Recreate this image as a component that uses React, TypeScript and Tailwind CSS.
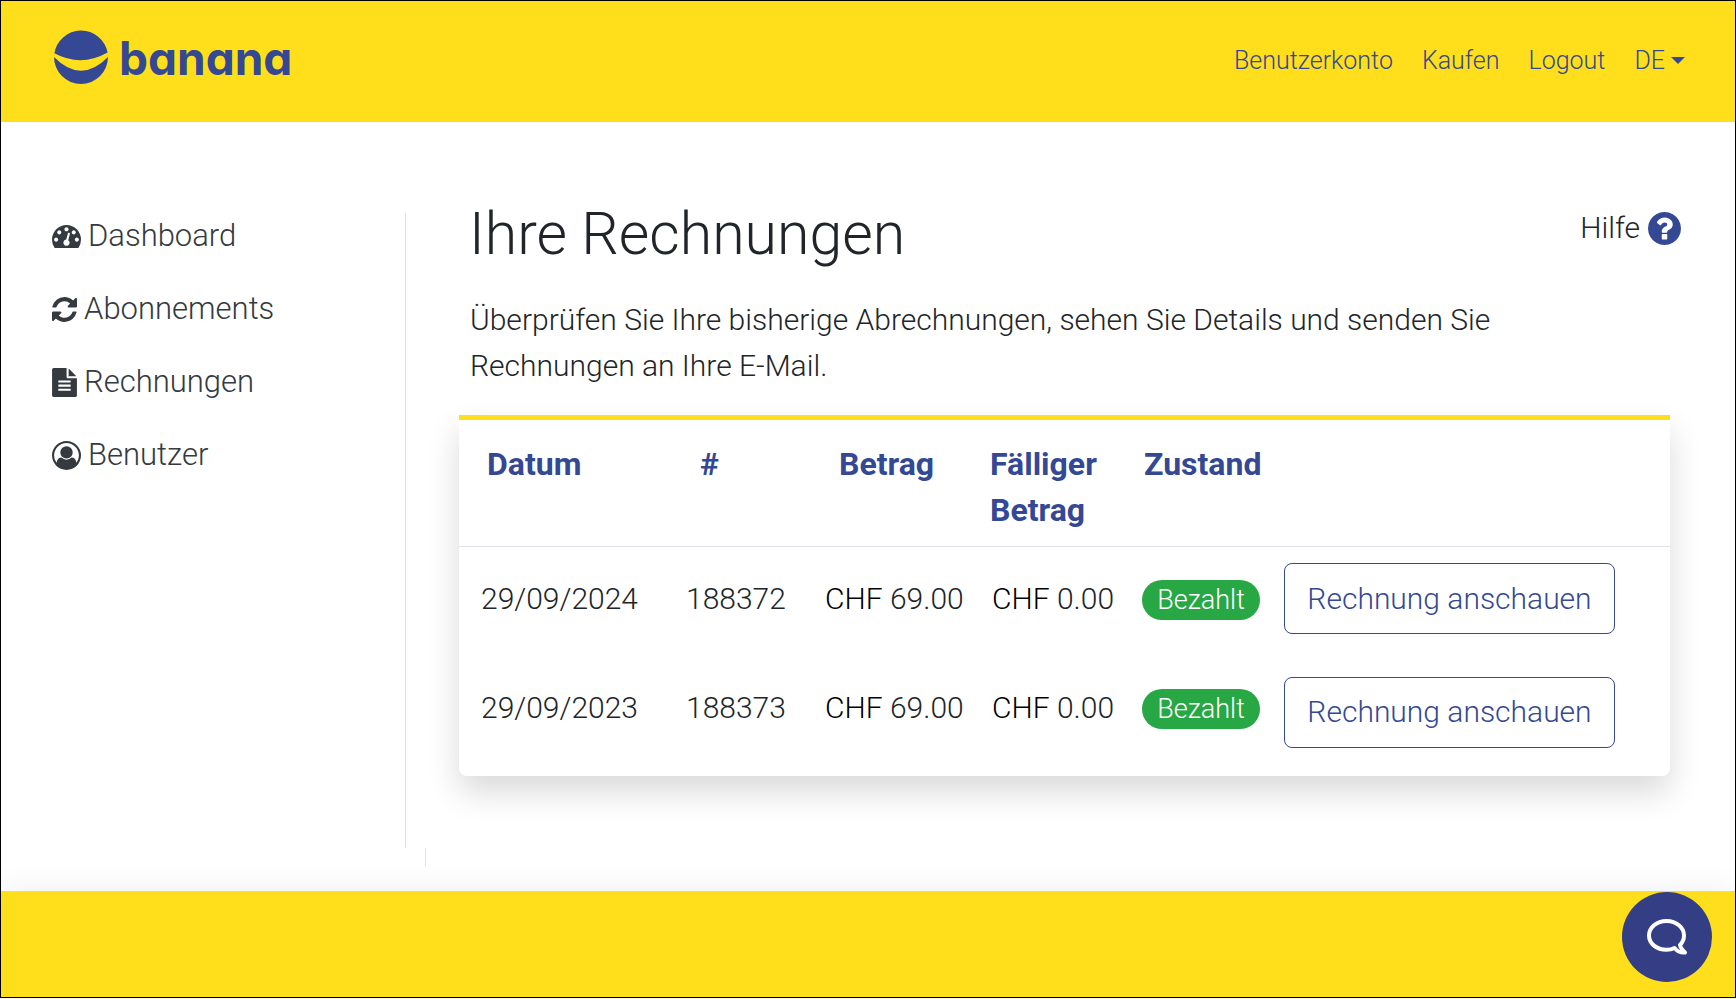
import React from "react";

type IconProps = { className?: string };

const TachometerIcon = ({ className }: IconProps) => (
  <svg viewBox="0 128 1792 1408" className={className} fill="currentColor" aria-hidden="true">
    <path d="M384 1152q0-53-37.5-90.5t-90.5-37.5-90.5 37.5-37.5 90.5 37.5 90.5 90.5 37.5 90.5-37.5 37.5-90.5zm192-448q0-53-37.5-90.5t-90.5-37.5-90.5 37.5-37.5 90.5 37.5 90.5 90.5 37.5 90.5-37.5 37.5-90.5zm428 481l101-382q6-26-7.5-48.5t-38.5-29.5-48 6.5-30 39.5l-101 382q-60 5-107 43.5t-63 98.5q-20 77 20 146t117 89 146-20 89-117q16-60-6-117t-72-91zm660-33q0-53-37.5-90.5t-90.5-37.5-90.5 37.5-37.5 90.5 37.5 90.5 90.5 37.5 90.5-37.5 37.5-90.5zm-640-640q0-53-37.5-90.5t-90.5-37.5-90.5 37.5-37.5 90.5 37.5 90.5 90.5 37.5 90.5-37.5 37.5-90.5zm448 192q0-53-37.5-90.5t-90.5-37.5-90.5 37.5-37.5 90.5 37.5 90.5 90.5 37.5 90.5-37.5 37.5-90.5zm320 448q0 261-141 483-19 29-54 29h-1402q-35 0-54-29-141-221-141-483 0-182 71-348t191-286 286-191 348-71 348 71 286 191 191 286 71 348z" transform="translate(0 -128)" />
  </svg>
);

const RefreshIcon = ({ className }: IconProps) => (
  <svg viewBox="128 128 1536 1536" className={className} fill="currentColor" aria-hidden="true">
    <path d="M1639 1056q0 5-1 7-64 268-268 434.5t-478 166.5q-146 0-282.5-55t-243.5-157l-129 129q-19 19-45 19t-45-19-19-45v-448q0-26 19-45t45-19h448q26 0 45 19t19 45-19 45l-137 137q71 66 161 102t187 36q134 0 250-65t186-179q11-17 53-117 8-23 30-23h192q13 0 22.5 9.5t9.5 22.5zm25-800v448q0 26-19 45t-45 19h-448q-26 0-45-19t-19-45 19-45l138-138q-148-137-349-137-134 0-250 65t-186 179q-11 17-53 117-8 23-30 23h-199q-13 0-22.5-9.5t-9.5-22.5v-7q65-268 270-434.5t480-166.5q146 0 284 55.5t245 156.5l130-129q19-19 45-19t45 19 19 45z" />
  </svg>
);

const FileIcon = ({ className }: IconProps) => (
  <svg viewBox="128 0 1536 1792" className={className} fill="currentColor" aria-hidden="true">
    <path d="M1596 476q14 14 28 36h-472v-472q22 14 36 28zm-476 164h544v1056q0 40-28 68t-68 28h-1344q-40 0-68-28t-28-68v-1600q0-40 28-68t68-28h800v544q0 40 28 68t68 28zm160 736v-64q0-14-9-23t-23-9h-704q-14 0-23 9t-9 23v64q0 14 9 23t23 9h704q14 0 23-9t9-23zm0-256v-64q0-14-9-23t-23-9h-704q-14 0-23 9t-9 23v64q0 14 9 23t23 9h704q14 0 23-9t9-23zm0-256v-64q0-14-9-23t-23-9h-704q-14 0-23 9t-9 23v64q0 14 9 23t23 9h704q14 0 23-9t9-23z" />
  </svg>
);

const UserIcon = ({ className }: IconProps) => (
  <svg viewBox="0 0 1792 1792" className={className} fill="currentColor" aria-hidden="true">
    <path d="M896 0q182 0 348 71t286 191 191 286 71 348q0 181-70.5 347t-190.5 286-286 191.5-349 71.5-349-71-285.5-191.5-190.5-286-71-347.5 71-348 191-286 286-191 348-71zm619 1351q149-205 149-455 0-156-61-298t-164-245-245-164-298-61-298 61-245 164-164 245-61 298q0 250 149 455 66-327 306-327 131 128 313 128t313-128q240 0 306 327zm-235-647q0-159-112.5-271.5t-271.5-112.5-271.5 112.5-112.5 271.5 112.5 271.5 271.5 112.5 271.5-112.5 112.5-271.5z" />
  </svg>
);

const HelpIcon = ({ className }: IconProps) => (
  <svg viewBox="128 128 1536 1536" className={className} fill="currentColor" aria-hidden="true">
    <path d="M1024 1376v-192q0-14-9-23t-23-9h-192q-14 0-23 9t-9 23v192q0 14 9 23t23 9h192q14 0 23-9t9-23zm256-672q0-88-55.5-163t-138.5-116-170-41q-243 0-371 213-15 24 8 42l132 100q7 6 19 6 16 0 25-12 53-68 86-92 34-24 86-24 48 0 85.5 26t37.5 59q0 38-20 61t-68 45q-63 28-115.5 86.5t-52.5 125.5v36q0 14 9 23t23 9h192q14 0 23-9t9-23q0-19 21.5-49.5t54.5-49.5q32-18 49-28.5t46-35 44.5-48 28-60.5 12.5-81zm384 192q0 209-103 385.5t-279.5 279.5-385.5 103-385.5-103-279.5-279.5-103-385.5 103-385.5 279.5-279.5 385.5-103 385.5 103 279.5 279.5 103 385.5z" />
  </svg>
);

const menu = [
  { label: "Dashboard", Icon: TachometerIcon, size: "w-[29px] h-[23px]" },
  { label: "Abonnements", Icon: RefreshIcon, size: "w-[25px] h-[25px]" },
  { label: "Rechnungen", Icon: FileIcon, size: "w-[25px] h-[29px]" },
  { label: "Benutzer", Icon: UserIcon, size: "w-[29px] h-[29px]" },
];

const invoices = [
  { date: "29/09/2024", number: "188372", amount: "69.00", due: "0.00", pad: "pt-4" },
  { date: "29/09/2023", number: "188373", amount: "69.00", due: "0.00", pad: "pt-[21px]" },
];

const Money = ({ value }: { value: string }) => (
  <>
    <span className="font-[350] text-black">CHF</span> {value}
  </>
);

export default function App() {
  return (
    <div className="flex min-h-screen flex-col bg-white pb-px">
      <div className="flex flex-1 flex-col border border-black font-['Roboto',sans-serif] text-[30px] leading-[46px] font-light text-[#212529]">
        <header className="flex h-[121px] items-center justify-between bg-[#ffdf1b] pr-[50px] pl-[53px] text-[#344893]">
          <a href="#" className="flex items-center gap-[11px]" aria-label="banana">
            <svg viewBox="0 0 54 54" className="mb-2.5 h-[54px] w-[54px]" fill="currentColor" aria-hidden="true">
              <path d="M.4 23.3A27 27 0 0 1 53.6 22.6Q27 37.6 .4 23.3Z" />
              <path d="M0 27Q27 54.5 54 27A27 27 0 0 1 0 27Z" />
            </svg>
            <span className="mb-2 font-['Inter',sans-serif] text-[46px] leading-[54px] font-bold [font-feature-settings:'cv11']">
              banana
            </span>
          </a>
          <nav className="mb-0.5 flex items-center gap-[29px] text-[25px] leading-[38px] font-[350]">
            <a href="#">Benutzerkonto</a>
            <a href="#">Kaufen</a>
            <a href="#">Logout</a>
            <button type="button" className="flex items-center gap-[6px]">
              DE
              <svg viewBox="0 0 14 7" className="h-[7px] w-[14px]" fill="currentColor" aria-hidden="true">
                <path d="M0 0H14L7 7Z" />
              </svg>
            </button>
          </nav>
        </header>

        <div className="flex flex-1 pt-[91px] pr-[65px] pb-[25px] pl-[51px]">
          <aside className="mb-[18px] w-[354px] shrink-0 border-r border-[#dee2e6]">
            <ul className="flex flex-col gap-[27px]">
              {menu.map(({ label, Icon, size }) => (
                <li key={label}>
                  <a href="#" className="flex items-center gap-[7px] text-[31px] font-[350] text-[#343a40]">
                    <Icon className={size} />
                    {label}
                  </a>
                </li>
              ))}
            </ul>
          </aside>
          <div className="ml-[19px] h-[18px] w-px shrink-0 self-end bg-[#dee2e6]" />

          <main className="-mt-2 ml-[33px] min-w-0 flex-1">
            <div className="flex items-start justify-between pl-2.5">
              <h1 className="text-[59px] leading-[58px]">Ihre Rechnungen</h1>
              <a href="#" className="-mr-[11px] flex items-center gap-2 font-[350]">
                Hilfe
                <HelpIcon className="h-[33px] w-[33px] text-[#344893]" />
              </a>
            </div>
            <p className="max-w-[1120px] pt-[34px] pl-[11px]">
              Überprüfen Sie Ihre bisherige Abrechnungen, sehen Sie Details und senden Sie Rechnungen an Ihre E-Mail.
            </p>

            <section className="mt-[26px] rounded-b-[8px] border-t-[5px] border-[#ffdf1b] bg-white shadow-[0_16px_32px_rgba(0,0,0,0.15)]">
              <table className="w-full table-fixed text-left">
                <colgroup>
                  <col className="w-[205px]" />
                  <col className="w-[139px]" />
                  <col className="w-[167px]" />
                  <col className="w-[150px]" />
                  <col className="w-[142px]" />
                  <col />
                </colgroup>
                <thead>
                  <tr className="border-b border-[#dee2e6] align-top text-[32px] text-[#344893] [&>th]:pt-[21px] [&>th]:pb-[13px] [&>th]:font-bold">
                    <th className="pl-7">Datum</th>
                    <th className="pl-9">#</th>
                    <th className="pl-9">Betrag</th>
                    <th className="pl-5">Fälliger Betrag</th>
                    <th className="pl-6">Zustand</th>
                    <th aria-label="Aktion" />
                  </tr>
                </thead>
                <tbody>
                  {invoices.map((row) => (
                    <tr key={row.number} className="h-[109px] align-top whitespace-nowrap last:h-[120px]">
                      <td className="pt-[29px] pl-[22px]">{row.date}</td>
                      <td className="pt-[29px] pl-[22px]">{row.number}</td>
                      <td className="pt-[29px] pl-[22px]">
                        <Money value={row.amount} />
                      </td>
                      <td className="pt-[29px] pl-[22px]">
                        <Money value={row.due} />
                      </td>
                      <td className="pt-[33px] pl-[22px]">
                        <span className="flex h-10 w-[118px] items-center justify-center rounded-[20px] bg-[#28a745] text-[27px] text-white">
                          Bezahlt
                        </span>
                      </td>
                      <td className={`pl-[22px] ${row.pad}`}>
                        <button
                          type="button"
                          className="h-[71px] w-[331px] rounded-[8px] border border-[#344893] text-[#344893]"
                        >
                          Rechnung anschauen
                        </button>
                      </td>
                    </tr>
                  ))}
                </tbody>
              </table>
            </section>
          </main>
        </div>

        <footer className="flex h-[106px] items-start justify-end bg-[#ffdf1b] pt-px pr-[23px] shadow-[0_0_32px_rgba(0,0,0,0.07)]">
          <button
            type="button"
            aria-label="Chat"
            className="flex h-[90px] w-[90px] items-center justify-center rounded-full bg-[#333e85] text-white"
          >
            <svg viewBox="0 0 42 38" className="h-[38px] w-[42px]" fill="none" stroke="currentColor" strokeWidth="4" strokeLinejoin="round" aria-hidden="true">
              <path d="M28.5 30C26 31.300 23.500 31.800 20.500 31.800C10.500 31.800 3 25.500 3 17.500C3 9.500 10.500 3 20.500 3C30.500 3 38 9.500 38 17.500C38 21.500 36.500 24.500 34 27C34.500 30 36.500 32 39 34.500C34.500 35 31.500 33.500 28.500 30Z" />
            </svg>
          </button>
        </footer>
      </div>
    </div>
  );
}
